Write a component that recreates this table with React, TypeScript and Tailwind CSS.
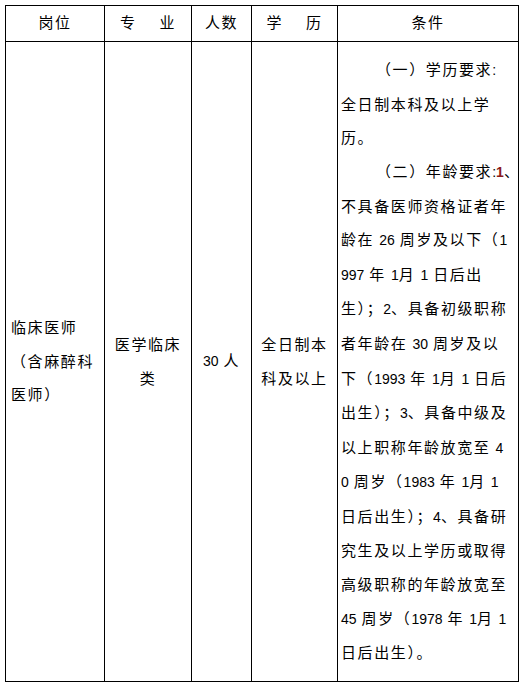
import React from "react";

const font = { fontFamily: '"Liberation Sans", "Noto Sans CJK SC", sans-serif' };

function T({ s }: { s: string }) {
  const parts: React.ReactNode[] = [];
  const re = /([\x21-\x7e]+)|( )|([^\x00-\x7f]+)/g;
  let m: RegExpExecArray | null;
  let k = 0;
  while ((m = re.exec(s)) !== null) {
    if (m[1]) {
      parts.push(
        <span key={k++} className="text-[14px] tracking-normal">
          {m[1]}
        </span>
      );
    } else if (m[2]) {
      parts.push(<span key={k++} className="inline-block w-[5px]" />);
    } else {
      parts.push(<span key={k++}>{m[3]}</span>);
    }
  }
  return <>{parts}</>;
}

const cond: React.ReactNode[] = [
  <span className="pl-[35px]">（一）学历要求<span className="text-[14px] tracking-normal">:</span></span>,
  <T s="全日制本科及以上学" />,
  <T s="历。" />,
  <span className="pl-[35px]">
    （二）年龄要求<span className="text-[14px] tracking-normal">:</span>
    <span className="text-[14px] tracking-normal font-bold text-[#8b1a1a]">1</span>、
  </span>,
  <T s="不具备医师资格证者年" />,
  <T s="龄在 26 周岁及以下（1" />,
  <T s="997 年 1月 1 日后出" />,
  <T s="生）；2、具备初级职称" />,
  <T s="者年龄在 30 周岁及以" />,
  <T s="下（1993 年 1月 1 日后" />,
  <T s="出生）；3、具备中级及" />,
  <T s="以上职称年龄放宽至 4" />,
  <T s="0 周岁（1983 年 1月 1" />,
  <T s="日后出生）；4、具备研" />,
  <T s="究生及以上学历或取得" />,
  <T s="高级职称的年龄放宽至" />,
  <T s="45 周岁（1978 年 1月 1" />,
  <T s="日后出生）。" />,
];

export default function App() {
  return (
    <div className="w-[523px] h-[685px] bg-white pt-[5px] pl-[5px]" style={font}>
      <div className="grid grid-cols-[99px_87px_60px_86px_181px] w-[514px] border-l border-t border-black text-[15px] text-black tracking-[1.6px]">
        <div className="h-[36px] border-r border-b border-black flex items-center justify-center">岗位</div>
        <div className="h-[36px] border-r border-b border-black flex items-center justify-center gap-[23px]">
          <span>专</span>
          <span>业</span>
        </div>
        <div className="h-[36px] border-r border-b border-black flex items-center justify-center">人数</div>
        <div className="h-[36px] border-r border-b border-black flex items-center justify-center gap-[23px]">
          <span>学</span>
          <span>历</span>
        </div>
        <div className="h-[36px] border-r border-b border-black flex items-center justify-center">条件</div>

        <div className="h-[640px] border-r border-b border-black flex items-center pl-[5px] leading-[33.6px]">
          <div>
            <div>临床医师</div>
            <div>（含麻醉科</div>
            <div>医师）</div>
          </div>
        </div>
        <div className="h-[640px] border-r border-b border-black flex items-center justify-center leading-[33.6px] text-center">
          <div>
            <div>医学临床</div>
            <div>类</div>
          </div>
        </div>
        <div className="h-[640px] border-r border-b border-black flex items-center justify-center">
          <T s="30 人" />
        </div>
        <div className="h-[640px] border-r border-b border-black flex items-center justify-center leading-[33.6px] text-center">
          <div>
            <div>全日制本</div>
            <div>科及以上</div>
          </div>
        </div>
        <div className="h-[640px] border-r border-b border-black flex items-center pl-[3px] leading-[33.6px]">
          <div className="whitespace-nowrap">
            {cond.map((c, i) => (
              <div key={i}>{c}</div>
            ))}
          </div>
        </div>
      </div>
    </div>
  );
}
